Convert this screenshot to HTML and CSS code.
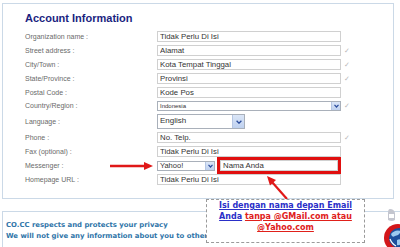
FILE: index.html
```html
<!DOCTYPE html>
<html lang="id">
<head>
    <meta charset="UTF-8">
    <title>Account Information</title>
    <link rel="stylesheet" href="styles.css">
</head>
<body>

<div class="page">

    <!-- Account form panel -->
    <div class="panel">
        <h2>Account Information</h2>
        <form class="form">
            <label>Organization name :</label>
            <input class="text" type="text" value="Tidak Perlu Di Isi">
            <span class="check"></span>

            <label>Street address :</label>
            <input class="text" type="text" value="Alamat">
            <span class="check">&#10003;</span>

            <label>City/Town :</label>
            <input class="text" type="text" value="Kota Tempat Tinggal">
            <span class="check">&#10003;</span>

            <label>State/Province :</label>
            <input class="text" type="text" value="Provinsi">
            <span class="check">&#10003;</span>

            <label>Postal Code :</label>
            <input class="text" type="text" value="Kode Pos">
            <span class="check"></span>

            <label>Country/Region :</label>
            <div class="select country">
                <span class="val">Indonesia</span>
                <span class="btn"><svg width="5" height="4" viewBox="0 0 5 4"><polyline points="0.5,0.8 2.5,3 4.5,0.8" fill="none" stroke="#2b4c9c" stroke-width="1.2"/></svg></span>
            </div>
            <span class="check">&#10003;</span>

            <label>Language :</label>
            <div class="select language">
                <span class="val">English</span>
                <span class="btn"><svg width="6" height="4" viewBox="0 0 6 4"><polyline points="0.6,0.8 3,3.2 5.4,0.8" fill="none" stroke="#2b4c9c" stroke-width="1.3"/></svg></span>
            </div>
            <span class="check"></span>

            <label>Phone :</label>
            <input class="text" type="text" value="No. Telp.">
            <span class="check">&#10003;</span>

            <label>Fax (optional) :</label>
            <input class="text" type="text" value="Tidak Perlu Di Isi">
            <span class="check"></span>

            <label>Messenger :</label>
            <div class="messenger">
                <div class="select im">
                    <span class="val">Yahoo!</span>
                    <span class="btn"><svg width="5" height="4" viewBox="0 0 5 4"><polyline points="0.5,0.8 2.5,3 4.5,0.8" fill="none" stroke="#2b4c9c" stroke-width="1.2"/></svg></span>
                </div>
                <input class="text nick" type="text" value="Nama Anda">
            </div>
            <span class="check"></span>

            <label>Homepage URL :</label>
            <input class="text" type="text" value="Tidak Perlu Di Isi">
            <span class="check"></span>
        </form>
    </div>

    <!-- Privacy note -->
    <div class="privacy">
        <p>CO.CC respects and protects your privacy</p>
        <p>We will not give any information about you to other parties.</p>
    </div>

    <!-- Annotations drawn over the screenshot -->
    <svg class="arrows" width="400" height="247" viewBox="0 0 400 247">
        <line x1="110" y1="166" x2="146" y2="166" stroke="#e01818" stroke-width="2.4"/>
        <polygon points="144,162 153,166 144,170" fill="#e01818"/>
        <line x1="287" y1="199" x2="272" y2="182" stroke="#e01818" stroke-width="2.2"/>
        <polygon points="267,176 276,180 270,185.5" fill="#e01818"/>
    </svg>

    <div class="callout">
        <span class="blue">Isi dengan nama depan Email</span><br>
        <span class="blue">Anda</span> <span class="red">tanpa @GMail.com atau</span><br>
        <span class="red">@Yahoo.com</span>
    </div>

    <svg class="logo" width="30" height="42" viewBox="0 0 30 42">
        <path d="M20 4 Q24 4 25 8 L25 15 Q22 17 18 15 L18 8 Q18 4 20 4 Z" fill="#c4c6cf"/>
        <path d="M19 9 L24 9 L24 13 L19 13 Z" fill="#ffffff"/>
        <circle cx="28" cy="33" r="14" fill="#d3161a"/>
        <circle cx="29" cy="33" r="10" fill="#1d4f9c"/>
        <path d="M21 29 Q25 24 31 26 Q29 31 25 31 Q22 33 21 29 Z" fill="#9ccaf0"/>
        <path d="M27 35 Q31 33 33 37 Q30 41 27 40 Z" fill="#9ccaf0"/>
        <path d="M20 34 Q22 39 26 41" fill="none" stroke="#ffffff" stroke-width="1.2"/>
    </svg>

</div>

</body>
</html>
```

FILE: styles.css
```css
body {
    margin: 0;
    background: #ffffff;
    font-family: "Liberation Sans", Arial, sans-serif;
    overflow: hidden;
}

.page {
    position: relative;
    width: 400px;
    height: 247px;
    overflow: hidden;
}

/* Main panel */
.panel {
    box-sizing: border-box;
    margin: 3px 0 0 2px;
    width: 392px;
    height: 196px;
    border: 1px solid #cbd9e7;
    padding: 8px 0 0 22px;
}

h2 {
    margin: 0 0 7px;
    font-size: 11px;
    line-height: 12px;
    font-weight: bold;
    color: #1b1f7f;
}

.form {
    display: grid;
    grid-template-columns: 132px 184px 18px;
    row-gap: 3px;
    align-items: center;
}

.form label {
    font-size: 7px;
    line-height: 8px;
    color: #6a6a6a;
}

.text {
    box-sizing: border-box;
    display: block;
    width: 184px;
    height: 11px;
    margin: 0;
    padding: 0 2px;
    border: 1px solid #d0d0d0;
    font-family: "Liberation Sans", Arial, sans-serif;
    font-size: 7.8px;
    color: #333333;
    background: #ffffff;
    outline: none;
}

.check {
    padding-left: 3px;
    font-family: "DejaVu Sans", sans-serif;
    font-size: 7px;
    color: #b8b8b8;
}

/* Drop-down boxes */
.select {
    box-sizing: border-box;
    display: flex;
    border: 1px solid #a9b0ba;
    background: #ffffff;
    font-size: 7.5px;
    color: #333333;
}

.select .val {
    flex: 1;
    padding-left: 2px;
    display: flex;
    align-items: center;
}

.select .btn {
    width: 8px;
    display: flex;
    align-items: center;
    justify-content: center;
    background: linear-gradient(#dbe6f7, #bfd1ef);
    border-left: 1px solid #b5c6e3;
}

.country {
    width: 184px;
    height: 10px;
    font-size: 6px;
}

.language {
    width: 88px;
    height: 15px;
    font-size: 8px;
}

.language .val {
    align-items: flex-start;
    padding-top: 1px;
}

.language .btn {
    width: 11px;
}

.messenger {
    display: flex;
    align-items: center;
    height: 11px;
}

.im {
    width: 58px;
    height: 10px;
    font-size: 7.5px;
}

.nick {
    width: 118px;
    margin-left: 5px;
    outline: 3px solid #e00f0f;
}

/* Privacy box */
.privacy {
    box-sizing: border-box;
    margin: 12px 0 0 2px;
    width: 420px;
    height: 60px;
    border-top: 1px solid #cbd9e7;
    border-left: 1px solid #cbd9e7;
    padding: 8px 0 0 3px;
}

.privacy p {
    margin: 0;
    white-space: nowrap;
    font-family: "DejaVu Sans", Verdana, sans-serif;
    font-size: 6.9px;
    line-height: 11px;
    font-weight: bold;
    color: #2e74a8;
}

/* Annotation overlays */
.arrows {
    position: absolute;
    left: 0;
    top: 0;
    pointer-events: none;
}

.callout {
    position: absolute;
    left: 206px;
    top: 199px;
    box-sizing: border-box;
    width: 159px;
    height: 44px;
    border: 1px dashed #9a9a9a;
    background: #ffffff;
    text-align: center;
    font-family: "DejaVu Sans", Verdana, sans-serif;
    font-size: 8px;
    line-height: 11px;
    font-weight: bold;
}

.callout .blue {
    color: #2a2fc8;
    text-decoration: underline;
}

.callout .red {
    color: #e0201a;
    text-decoration: underline;
}

.logo {
    position: absolute;
    left: 370px;
    top: 205px;
}
```
